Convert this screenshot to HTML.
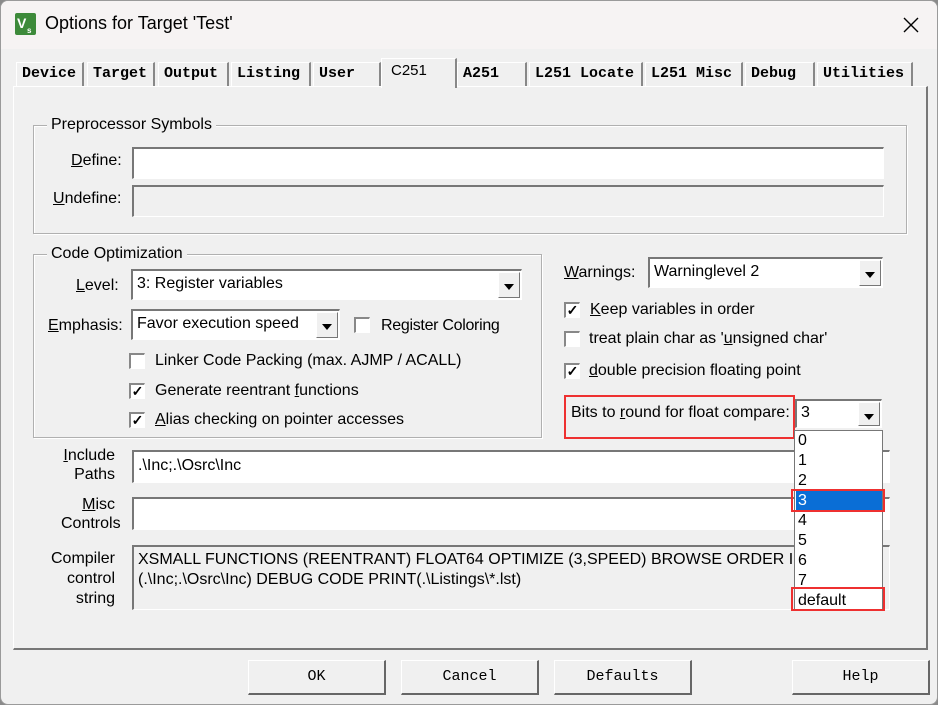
<!DOCTYPE html>
<html><head><meta charset="utf-8"><style>
*{box-sizing:border-box;margin:0;padding:0}
body{width:938px;height:705px;background:#8a8a8a;font-family:"Liberation Sans",Arial,sans-serif;font-size:16px;color:#000;overflow:hidden;position:relative}
.win{position:absolute;left:0;top:0;width:938px;height:705px;background:#f0f0f0;border:1px solid #9a9a9a;border-radius:8px;overflow:hidden}
.title{position:absolute;left:0;top:0;width:100%;height:48px;background:#f6f3f3}
.a{position:absolute;white-space:nowrap}
.mono{font-family:"Liberation Mono","DejaVu Sans Mono",monospace;font-weight:bold;font-size:15px;letter-spacing:0px}
.tab{position:absolute;top:61px;height:24px;background:#f0f0f0;border-top:1px solid #fff;border-left:1px solid #fff;border-right:2px solid #888;padding:2px 0 0 5px}
.panel{position:absolute;left:12px;top:85px;width:915px;height:564px;border-left:1px solid #fff;border-top:1px solid #fff;border-right:2px solid #777;border-bottom:2px solid #777}
.grp{position:absolute;border:1px solid #b0b0b0;box-shadow:1px 1px 0 #fff inset, 1px 1px 0 #fff}
.leg{position:absolute;background:#f0f0f0;padding:0 4px;top:-10px;left:13px}
.inp{position:absolute;background:#fff;border-top:2px solid #777;border-left:2px solid #777;border-bottom:1px solid #fff;border-right:1px solid #fff;padding:4px 4px}
.dis{background:#f0f0f0}
.dd{position:absolute;right:1px;top:1px;bottom:1px;width:22px;background:#f0f0f0;border-top:1px solid #fff;border-left:1px solid #fff;border-right:1px solid #777;border-bottom:1px solid #777}
.dd:after{content:"";position:absolute;left:5px;top:11px;border-left:5px solid transparent;border-right:5px solid transparent;border-top:6px solid #000}
.cb{position:absolute;width:16px;height:16px;background:#fff;border-top:2px solid #888;border-left:2px solid #888;border-right:1px solid #fff;border-bottom:1px solid #fff;font-size:14px;line-height:13px;text-align:center;font-weight:bold}
.btn{position:absolute;top:659px;width:138px;height:35px;border-top:1px solid #fff;border-left:1px solid #fff;border-right:2px solid #666;border-bottom:2px solid #666;text-align:center;line-height:31px}
.red{position:absolute;border:2px solid #ee3030}
u{text-decoration:underline}
</style></head><body><div class="win">
<div class="title"></div>
<svg class="a" style="left:14px;top:12px" width="21" height="22" viewBox="0 0 21 22"><rect width="21" height="22" rx="2" fill="#3d8a3a"/><text x="2" y="15" font-family="Liberation Sans" font-weight="bold" font-size="14" fill="#fff">V</text><text x="12" y="20" font-family="Liberation Sans" font-weight="bold" font-size="8" fill="#fff">s</text></svg>
<div class="a" style="left:44px;top:12px;font-size:18px">Options for Target 'Test'</div>
<svg class="a" style="left:902px;top:16px" width="16" height="16"><path d="M1 1L15 15M15 1L1 15" stroke="#000" stroke-width="1.4"/></svg>

<div class="panel"></div>
<div class="tab mono" style="left:15px;width:68px">Device</div>
<div class="tab mono" style="left:86px;width:68px">Target</div>
<div class="tab mono" style="left:157px;width:71px">Output</div>
<div class="tab mono" style="left:230px;width:80px">Listing</div>
<div class="tab mono" style="left:312px;width:68px">User</div>
<div class="tab mono" style="left:456px;width:70px">A251</div>
<div class="tab mono" style="left:528px;width:114px">L251 Locate</div>
<div class="tab mono" style="left:644px;width:98px">L251 Misc</div>
<div class="tab mono" style="left:744px;width:70px">Debug</div>
<div class="tab mono" style="left:816px;width:96px">Utilities</div>
<div class="tab" style="left:380px;top:57px;width:76px;height:30px;border-bottom:none;padding:3px 0 0 9px;font-family:'Liberation Sans',sans-serif;font-size:15px">C251</div>

<div class="grp" style="left:32px;top:124px;width:874px;height:109px"><div class="leg">Preprocessor Symbols</div></div>
<div class="a" style="left:70px;top:151px"><u>D</u>efine:</div>
<div class="inp" style="left:131px;top:146px;width:752px;height:32px"></div>
<div class="a" style="left:52px;top:189px"><u>U</u>ndefine:</div>
<div class="inp dis" style="left:131px;top:184px;width:752px;height:32px"></div>

<div class="grp" style="left:32px;top:253px;width:509px;height:184px"><div class="leg">Code Optimization</div></div>
<div class="a" style="left:75px;top:276px"><u>L</u>evel:</div>
<div class="inp" style="left:130px;top:268px;width:391px;height:31px">3: Register variables<div class="dd"></div></div>
<div class="a" style="left:47px;top:316px"><u>E</u>mphasis:</div>
<div class="inp" style="left:130px;top:308px;width:209px;height:31px">Favor execution speed<div class="dd"></div></div>
<div class="cb" style="left:353px;top:316px"></div><div class="a" style="left:380px;top:316px;letter-spacing:-0.3px">Re<u>g</u>ister Coloring</div>
<div class="cb" style="left:128px;top:352px"></div><div class="a" style="left:154px;top:351px">Linker Code Packing (max. AJMP / ACALL)</div>
<div class="cb" style="left:128px;top:382px">✓</div><div class="a" style="left:154px;top:381px">Generate reentrant <u>f</u>unctions</div>
<div class="cb" style="left:128px;top:411px">✓</div><div class="a" style="left:154px;top:410px"><u>A</u>lias checking on pointer accesses</div>

<div class="a" style="left:563px;top:263px"><u>W</u>arnings:</div>
<div class="inp" style="left:647px;top:256px;width:235px;height:31px">Warninglevel 2<div class="dd"></div></div>
<div class="cb" style="left:563px;top:301px">✓</div><div class="a" style="left:589px;top:300px"><u>K</u>eep variables in order</div>
<div class="cb" style="left:563px;top:330px"></div><div class="a" style="left:588px;top:329px">treat plain char as '<u>u</u>nsigned char'</div>
<div class="cb" style="left:563px;top:362px">✓</div><div class="a" style="left:588px;top:361px"><u>d</u>ouble precision floating point</div>

<div class="red" style="left:563px;top:394px;width:231px;height:44px"></div>
<div class="a" style="left:570px;top:403px">Bits to <u>r</u>ound for float compare:</div>
<div class="inp" style="left:794px;top:398px;width:87px;height:29px;padding:3px 4px">3<div class="dd"></div></div>

<div class="a" style="left:60px;top:445px;text-align:right;width:54px;line-height:19px"><u>I</u>nclude<br>Paths</div>
<div class="inp" style="left:131px;top:449px;width:758px;height:33px;padding-top:5px">.\Inc;.\Osrc\Inc</div>
<div class="a" style="left:60px;top:494px;text-align:right;width:54px;line-height:19px"><u>M</u>isc<br>Controls</div>
<div class="inp" style="left:131px;top:496px;width:758px;height:33px"></div>
<div class="a" style="left:40px;top:548px;text-align:right;width:74px;line-height:20px">Compiler<br>control<br>string</div>
<div class="inp dis" style="left:131px;top:544px;width:758px;height:65px;line-height:20px;overflow:hidden;padding-top:3px">XSMALL FUNCTIONS (REENTRANT) FLOAT64 OPTIMIZE (3,SPEED) BROWSE ORDER I<br>(.\Inc;.\Osrc\Inc) DEBUG CODE PRINT(.\Listings\*.lst)</div>

<div class="a" style="left:793px;top:429px;width:89px;height:181px;background:#fff;border:1px solid #777;line-height:20px;padding-left:3px">0<br>1<br>2<br><span style="display:block;margin-left:-2px;padding-left:2px;background:#0a6ed6;color:#fff">3</span>4<br>5<br>6<br>7<br>default</div>
<div class="red" style="left:790px;top:488px;width:94px;height:23px"></div>
<div class="red" style="left:790px;top:586px;width:94px;height:24px"></div>

<div class="btn mono" style="left:247px;font-weight:normal">OK</div>
<div class="btn mono" style="left:400px;font-weight:normal">Cancel</div>
<div class="btn mono" style="left:553px;font-weight:normal">Defaults</div>
<div class="btn mono" style="left:791px;font-weight:normal">Help</div>
</div></body></html>
